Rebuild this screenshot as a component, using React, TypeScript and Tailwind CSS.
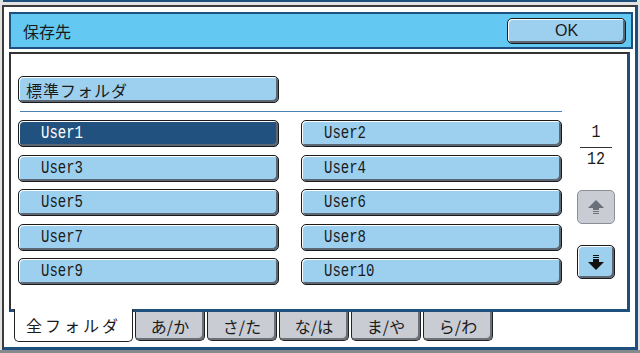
import React from 'react';

const jp = 'font-["Noto_Sans_CJK_JP","Noto_Sans",sans-serif]';
const mono = 'font-["Liberation_Mono","DejaVu_Sans_Mono",monospace]';

const users = ['User1', 'User2', 'User3', 'User4', 'User5', 'User6', 'User7', 'User8', 'User9', 'User10'];
const tabs = ['あ/か', 'さ/た', 'な/は', 'ま/や', 'ら/わ'];

const btnBase =
  'rounded-[5px] border border-[#1a1a1a] shadow-[inset_1px_1px_0_#ffffff,inset_-2px_-2px_0_#5d6773]';

const ArrowUp = () => (
  <svg width="16" height="15" viewBox="0 0 16 15">
    <path d="M8 0 L16 8 L11 8 L11 10 L5 10 L5 8 L0 8 Z" fill="#6a707a" />
    <rect x="5" y="11" width="6" height="1" fill="#6a707a" />
    <rect x="5" y="13" width="6" height="1" fill="#6a707a" />
  </svg>
);

const ArrowDown = () => (
  <svg width="16" height="15" viewBox="0 0 16 15">
    <rect x="5" y="0" width="6" height="1" fill="#111" />
    <rect x="5" y="2" width="6" height="1" fill="#111" />
    <path d="M5 4 L11 4 L11 7 L16 7 L8 15 L0 7 L5 7 Z" fill="#111" />
  </svg>
);

export default function App() {
  return (
    <div className="w-[640px] h-[353px] bg-[#e2e2e2] overflow-hidden">
      <div className="h-[2px] mx-[3px] bg-[#1f4f7d]" />
      <div className="mt-[3px] ml-[2px] w-[636px] h-[345px] bg-white border-l-2 border-t-2 border-[#3c3c3c] border-r-[3px] border-b-[3px] border-r-[#1f4f7d] border-b-[#1f4f7d] pl-[5px] pt-[5px]">
        {/* header */}
        <div className="w-[624px] h-[37px] border-2 border-[#1f4f7d] bg-[#63c9f3] flex items-center justify-between pl-[12px] pr-[5px]">
          <span className={`${jp} text-[16px] text-[#1a1a1a] leading-none`}>保存先</span>
          <button
            className={`${btnBase} w-[119px] h-[26px] bg-[#9dd0ef] flex items-center justify-center font-["Liberation_Sans",sans-serif] text-[16px] text-[#1a1a1a]`}
          >
            OK
          </button>
        </div>

        {/* content */}
        <div className="mt-[3px] w-[621px] h-[260px] border-l-2 border-t-2 border-[#333] border-r-[3px] border-b-[3px] border-r-[#1f4f7d] border-b-[#1f4f7d] pl-[7px] pt-[22px]">
          <button
            className={`${btnBase} w-[261px] h-[27px] bg-[#9dd0ef] flex items-center pl-[7px] ${jp} text-[16px] tracking-[1px] text-[#1a1a1a]`}
          >
            標準フォルダ
          </button>
          <div className="mt-[8px] ml-[2px] w-[542px] h-px bg-[#4a80b4]" />

          <div className="mt-[8px] flex">
            <div className="w-[544px] grid grid-cols-[261px_261px] gap-x-[22px] gap-y-[7.5px]">
              {users.map((u, i) => (
                <button
                  key={u}
                  className={`${btnBase} h-[27px] flex items-center pl-[22px] ${mono} text-[14px] ${
                    i === 0 ? 'bg-[#21527f] text-white' : 'bg-[#9dd0ef] text-[#1a1a1a]'
                  }`}
                >
                  <span className="inline-block scale-y-[1.25] font-light">{u}</span>
                </button>
              ))}
            </div>

            <div className="ml-[15px] w-[38px] flex flex-col items-center">
              <span className={`mt-[5px] ${mono} text-[15px] leading-[16px] text-[#1a1a1a] scale-y-[1.2]`}>1</span>
              <div className="mt-[6px] w-[32px] h-px bg-[#333]" />
              <span className={`mt-[4px] ${mono} text-[15px] leading-[16px] text-[#1a1a1a] scale-y-[1.2]`}>12</span>
              <div className="mt-[22px] w-[38px] h-[34px] rounded-[5px] border border-[#8a8f97] bg-[#c9ccd3] flex items-center justify-center">
                <ArrowUp />
              </div>
              <div
                className={`${btnBase} mt-[21px] w-[38px] h-[34px] bg-[#9dd0ef] flex items-center justify-center`}
              >
                <ArrowDown />
              </div>
            </div>
          </div>
        </div>

        {/* tabs */}
        <div className="flex items-start pl-[5px]">
          <div
            className={`relative -mt-[3px] w-[119px] h-[33px] bg-white border-x border-b border-[#222] rounded-b-[5px] flex items-center justify-center ${jp} text-[16px] tracking-[3px] text-[#1a1a1a]`}
          >
            全フォルダ
          </div>
          <div className="flex gap-[2px] ml-[2px]">
            {tabs.map((t) => (
              <div
                key={t}
                className={`w-[70px] h-[29px] bg-[#c9ccd3] border border-t-0 border-[#222] rounded-b-[5px] shadow-[inset_-2px_-2px_0_#6b7178] flex items-center justify-center ${jp} text-[16px] text-[#1a1a1a]`}
              >
                {t}
              </div>
            ))}
          </div>
        </div>
      </div>
      <div className="h-[3px] bg-[#858a8f]" />
    </div>
  );
}
